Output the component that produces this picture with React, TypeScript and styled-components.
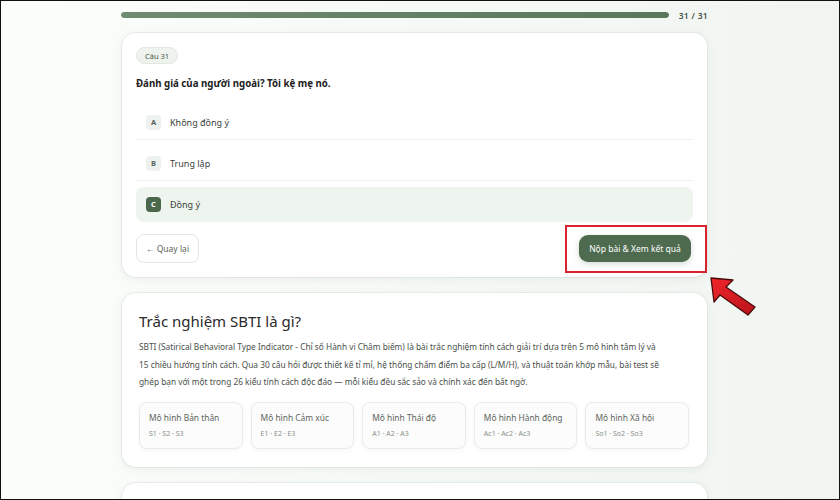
import React from "react";
import styled, { createGlobalStyle } from "styled-components";

const Global = createGlobalStyle`
  html, body { margin: 0; padding: 0; }
  body { font-family: "Noto Sans", "Open Sans", sans-serif; color: #2b2f2b; }
  * { box-sizing: border-box; }
`;

const Frame = styled.div`
  width: 840px;
  height: 500px;
  overflow: hidden;
  border: 1px solid #111;
  background: linear-gradient(90deg, #fbfdfb 0%, #f6faf6 50%, #f1f5f2 100%);
  position: relative;
`;

const Page = styled.div`
  width: 587px;
  margin-left: 120px;
  padding-top: 10px;
  display: flex;
  flex-direction: column;
`;

const ProgressRow = styled.div`
  display: flex;
  align-items: center;
  gap: 10px;
  height: 8px;
  margin-bottom: 14px;
`;

const Track = styled.div`
  flex: 1;
  height: 6px;
  border-radius: 3px;
  background: #dfe6df;
  overflow: hidden;
`;

const Fill = styled.div`
  height: 100%;
  border-radius: 3px;
  background: linear-gradient(90deg, #6f8c71, #5a775c);
`;

const Count = styled.span`
  font-size: 8.5px;
  font-weight: 600;
  color: #4a524a;
  letter-spacing: 0.3px;
`;

const Card = styled.div<{ $pad?: string }>`
  display: flex;
  flex-direction: column;
  align-items: stretch;
  background: #fff;
  border-radius: 14px;
  box-shadow: 0 2px 10px rgba(60, 80, 60, 0.08), 0 0 0 1px rgba(220, 228, 220, 0.5);
  padding: ${(p) => p.$pad ?? "14px"};
  margin-bottom: 16px;
  margin-left: 1px;
  width: 585px;
`;

const Badge = styled.span`
  align-self: flex-start;
  display: flex;
  align-items: center;
  height: 17px;
  padding: 0 8px;
  border-radius: 9px;
  background: #eef3ee;
  border: 1px solid #e0e8e0;
  font-size: 7.5px;
  color: #4a564a;
`;

const Question = styled.div`
  margin-top: 13px;
  font-size: 9.7px;
  line-height: 14px;
  font-weight: 700;
  color: #222;
  margin-bottom: 14px;
`;

const Options = styled.div`
  display: flex;
  flex-direction: column;
  gap: 6px;
`;

const Option = styled.div<{ $selected?: boolean }>`
  height: 35px;
  display: flex;
  align-items: center;
  gap: 9px;
  padding: 0 10px;
  border-radius: ${(p) => (p.$selected ? "8px" : "0")};
  background: ${(p) => (p.$selected ? "#edf5ee" : "transparent")};
  border-bottom: 1px solid ${(p) => (p.$selected ? "transparent" : "#f0f2f0")};
  font-size: 9px;
  color: #3a3f3a;
`;

const Letter = styled.span<{ $selected?: boolean }>`
  width: 15px;
  height: 15px;
  border-radius: 4px;
  display: inline-flex;
  align-items: center;
  justify-content: center;
  font-size: 7.5px;
  font-weight: 700;
  background: ${(p) => (p.$selected ? "#4b684d" : "#eef2ee")};
  color: ${(p) => (p.$selected ? "#fff" : "#5a625a")};
`;

const Footer = styled.div`
  margin-top: 12px;
  display: flex;
  justify-content: space-between;
  align-items: center;
  padding-right: 2px;
`;

const BackButton = styled.button`
  height: 29px;
  padding: 0 9px;
  border: 1px solid #e2e7e2;
  border-radius: 8px;
  background: #fff;
  font-family: inherit;
  font-size: 8.5px;
  color: #5a625a;
`;

const SubmitWrap = styled.div`
  position: relative;
`;

const SubmitButton = styled.button`
  height: 27px;
  width: 112px;
  border: none;
  border-radius: 9px;
  background: #4e6b50;
  color: #fff;
  font-family: inherit;
  font-size: 8.5px;
  box-shadow: 0 2px 6px rgba(40, 70, 40, 0.2);
`;

const Highlight = styled.div`
  position: absolute;
  left: -14px;
  top: -10px;
  width: 142px;
  height: 48px;
  border: 2px solid #d9232e;
  pointer-events: none;
`;

const Arrow = styled.svg`
  position: absolute;
  left: 706px;
  top: 273px;
`;

const Title = styled.h2`
  margin: 0 0 6px 0;
  font-size: 15px;
  line-height: 22px;
  font-weight: 400;
  color: #2a2a2a;
`;

const Para = styled.p`
  margin: 0 0 11px 0;
  max-width: 527px;
  font-size: 8.3px;
  line-height: 17.5px;
  color: #4a4f4a;
`;

const ModelGrid = styled.div`
  display: grid;
  grid-template-columns: repeat(5, 1fr);
  gap: 8px;
`;

const ModelCard = styled.div`
  height: 47px;
  border: 1px solid #e8ede8;
  border-radius: 8px;
  background: #fbfcfb;
  box-shadow: 0 1px 4px rgba(60, 80, 60, 0.06);
  padding: 9px 9px 0;
  display: flex;
  flex-direction: column;
  gap: 6px;
`;

const ModelName = styled.span`
  font-size: 8.4px;
  color: #5e645e;
`;

const ModelCode = styled.span`
  font-size: 7px;
  color: #8a908a;
`;

const models = [
  ["Mô hình Bản thân", "S1 · S2 · S3"],
  ["Mô hình Cảm xúc", "E1 · E2 · E3"],
  ["Mô hình Thái độ", "A1 · A2 · A3"],
  ["Mô hình Hành động", "Ac1 · Ac2 · Ac3"],
  ["Mô hình Xã hội", "So1 · So2 · So3"],
];

const opts = [
  ["A", "Không đồng ý", false],
  ["B", "Trung lập", false],
  ["C", "Đồng ý", true],
] as const;

export default function App() {
  return (
    <>
      <Global />
      <Frame>
        <Page>
          <ProgressRow>
            <Track>
              <Fill style={{ width: "100%" }} />
            </Track>
            <Count>31 / 31</Count>
          </ProgressRow>
          <Card $pad="14px 14px 14px 14px">
            <Badge>Câu 31</Badge>
            <Question>Đánh giá của người ngoài? Tôi kệ mẹ nó.</Question>
            <Options>
              {opts.map(([l, t, s]) => (
                <Option key={l} $selected={s}>
                  <Letter $selected={s}>{l}</Letter>
                  {t}
                </Option>
              ))}
            </Options>
            <Footer>
              <BackButton>← Quay lại</BackButton>
              <SubmitWrap>
                <SubmitButton>Nộp bài &amp; Xem kết quả</SubmitButton>
                <Highlight />
              </SubmitWrap>
            </Footer>
          </Card>
          <Card $pad="17px 18px 18px 17px">
            <Title>Trắc nghiệm SBTI là gì?</Title>
            <Para>
              SBTI (Satirical Behavioral Type Indicator - Chỉ số Hành vi Châm biếm) là bài trắc nghiệm tính cách giải trí dựa trên 5 mô hình tâm lý và 15 chiều hướng tính cách. Qua 30 câu hỏi được thiết kế tỉ mỉ, hệ thống chấm điểm ba cấp (L/M/H), và thuật toán khớp mẫu, bài test sẽ ghép bạn với một trong 26 kiểu tính cách độc đáo — mỗi kiểu đều sắc sảo và chính xác đến bất ngờ.
            </Para>
            <ModelGrid>
              {models.map(([n, c]) => (
                <ModelCard key={n}>
                  <ModelName>{n}</ModelName>
                  <ModelCode>{c}</ModelCode>
                </ModelCard>
              ))}
            </ModelGrid>
          </Card>
          <Card $pad="14px" style={{ height: 60 }} />
        </Page>
        <Arrow width="52" height="44" viewBox="0 0 52 44">
          <defs>
            <linearGradient id="ag" x1="0" y1="0" x2="1" y2="1">
              <stop offset="0" stopColor="#f0252b" />
              <stop offset="1" stopColor="#b8141a" />
            </linearGradient>
          </defs>
          <polygon
            points="4,4 26,6 19,13 48,33 41,41 13,21 7,28"
            fill="url(#ag)"
            stroke="#4a0a0a"
            strokeWidth="1.3"
            strokeLinejoin="round"
          />
        </Arrow>
      </Frame>
    </>
  );
}
